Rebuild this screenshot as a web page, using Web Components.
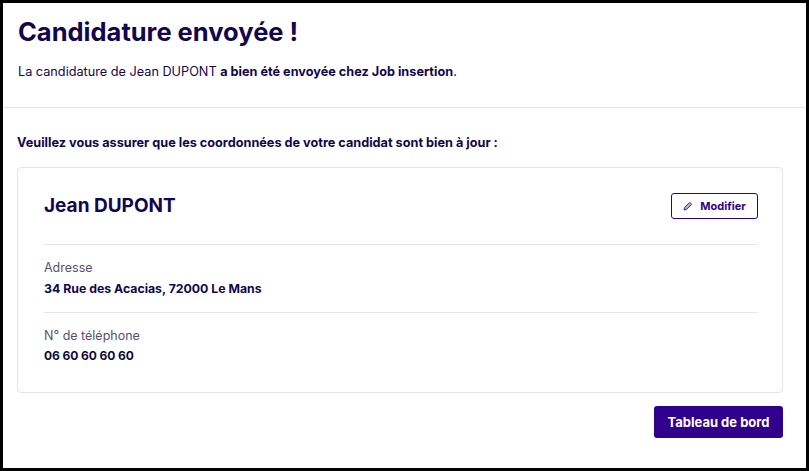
<!DOCTYPE html>
<html lang="fr">
<head>
<meta charset="UTF-8" />
<title>Candidature envoyée</title>
<style>
  html, body { margin: 0; padding: 0; height: 100%; overflow: hidden; }
  body { font-family: Inter, "Liberation Sans", sans-serif; color: #12074d; background: #fff; }
</style>
</head>
<body>
<app-frame>
  <page-header>
    <span slot="title">Candidature envoyée !</span>
    La candidature de Jean DUPONT <b>a bien été envoyée chez Job insertion</b>.
  </page-header>
  <page-body>
    <span slot="intro">Veuillez vous assurer que les coordonnées de votre candidat sont bien à jour :</span>
    <contact-card name="Jean DUPONT">
      <info-row label="Adresse">34 Rue des Acacias, 72000 Le Mans</info-row>
      <info-row label="N° de téléphone" tight>06 60 60 60 60</info-row>
    </contact-card>
    <primary-button slot="actions">Tableau de bord</primary-button>
  </page-body>
</app-frame>

<script>
  function define(name, html) {
    customElements.define(name, class extends HTMLElement {
      constructor() {
        super();
        this.attachShadow({ mode: 'open' }).innerHTML = html(this);
      }
    });
  }

  define('app-frame', () => `
    <style>
      :host { display: block; box-sizing: border-box; height: 471px; border: 3px solid #000; background: #fff; }
    </style>
    <slot></slot>`);

  define('page-header', () => `
    <style>
      :host { display: block; height: 105px; box-sizing: border-box; padding: 12px 15px 0; border-bottom: 1px solid #e6e6ea; font-size: 12.7px; }
      h1 { margin: 0 0 13px; font-size: 25.5px; line-height: 34px; font-weight: 700; }
      div { line-height: 20px; }
    </style>
    <h1><slot name="title"></slot></h1>
    <div><slot></slot></div>`);

  define('page-body', () => `
    <style>
      :host { display: block; padding: 25px 23px 0 14px; }
      p { margin: 0 0 14px; font-size: 12.7px; line-height: 20px; font-weight: 700; }
      .actions { display: flex; justify-content: flex-end; margin-top: 13px; }
    </style>
    <p><slot name="intro"></slot></p>
    <slot></slot>
    <div class="actions"><slot name="actions"></slot></div>`);

  define('contact-card', (el) => `
    <style>
      :host { display: block; box-sizing: border-box; height: 226px; padding: 0 24px 0 26px; border: 1px solid #e6e6ea; border-radius: 4px; }
      .head { display: flex; align-items: center; justify-content: space-between; height: 76px; }
      h2 { margin: -2px 0 0; font-size: 19px; font-weight: 700; }
      edit-button { margin-top: -1px; }
    </style>
    <div class="head">
      <h2>${el.getAttribute('name')}</h2>
      <edit-button></edit-button>
    </div>
    <slot></slot>`);

  define('edit-button', () => `
    <style>
      :host { display: inline-flex; align-items: center; justify-content: center; gap: 7px; box-sizing: border-box; width: 87px; height: 26px; border: 1px solid #30008c; border-radius: 3px; color: #30008c; font-size: 11px; font-weight: 700; }
      svg { width: 10px; height: 10px; }
    </style>
    <svg viewBox="0 0 24 24" fill="currentColor" fill-opacity=".3" stroke="currentColor" stroke-width="2.2" stroke-linejoin="round"><path d="M2.5 21.5l1.4-5.9L16.2 3.3l4.5 4.5L8.4 20.1z"/></svg>
    <span>Modifier</span>`);

  define('info-row', (el) => `
    <style>
      :host { display: block; height: 68px; box-sizing: border-box; padding-top: 13px; border-top: 1px solid #e6e6ee; }
      .label { font-size: 12.5px; line-height: 20px; color: #575074; }
      .value { font-size: 12.3px; line-height: 20px; font-weight: 700; margin-top: 1px; }
      :host([tight]) .value { margin-top: 0; font-size: 12px; letter-spacing: -0.08px; color: #0c0a3a; }
    </style>
    <div class="label">${el.getAttribute('label')}</div>
    <div class="value"><slot></slot></div>`);

  define('primary-button', () => `
    <style>
      :host { display: inline-flex; align-items: center; justify-content: center; box-sizing: border-box; width: 129px; height: 32px; border-radius: 3px; background: #30008c; color: #fff; font-size: 13px; font-weight: 700; }
    </style>
    <slot></slot>`);
</script>
</body>
</html>
